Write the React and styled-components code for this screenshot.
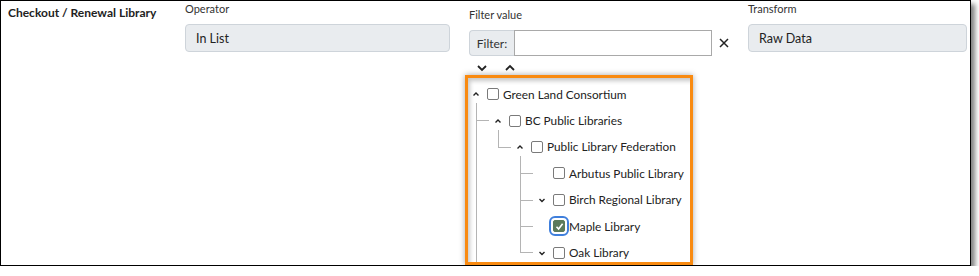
import React from "react";
import styled, { createGlobalStyle } from "styled-components";

const GlobalStyle = createGlobalStyle`
  html, body {
    margin: 0;
    padding: 0;
    background: #fff;
  }
  body {
    font-family: Lato, "Liberation Sans", Arial, sans-serif;
    color: #212529;
  }
`;

const Frame = styled.div`
  width: 971px;
  height: 266px;
  box-sizing: border-box;
  border: 1px solid #000;
  box-shadow: 4px 4px 5px rgba(0, 0, 0, 0.5);
  background: #fff;
  overflow: hidden;
  display: flex;
  align-items: flex-start;
  padding-left: 7px;
`;

const RuleTitle = styled.div`
  width: 177px;
  flex: none;
  padding-top: 4px;
  font-size: 12px;
  font-weight: 700;
  line-height: 16px;
  color: #222;
`;

const Column = styled.div`
  width: ${(p) => p.$width}px;
  margin-right: ${(p) => p.$gap || 0}px;
  padding-top: ${(p) => p.$top || 1}px;
  flex: none;
  display: flex;
  flex-direction: column;
`;

const FieldLabel = styled.div`
  font-size: 11px;
  line-height: 14px;
  color: #333;
  margin-bottom: 8px;
`;

const ReadonlyBox = styled.div`
  height: 28px;
  box-sizing: border-box;
  border: 1px solid #ced4da;
  border-radius: 4px;
  background: #e9ecef;
  padding-left: 10px;
  display: flex;
  align-items: center;
  font-size: 12.5px;
  color: #222;
`;

const FilterRow = styled.div`
  display: flex;
  align-items: center;
  height: 26px;
`;

const Prepend = styled.div`
  width: 45px;
  height: 26px;
  box-sizing: border-box;
  border: 1px solid #ced4da;
  border-right: none;
  border-radius: 4px 0 0 4px;
  background: #e9ecef;
  display: flex;
  align-items: center;
  justify-content: center;
  font-size: 12px;
  color: #333;
`;

const FilterInput = styled.input`
  width: 198px;
  height: 26px;
  box-sizing: border-box;
  border: 1px solid #a9a9a9;
  border-radius: 0;
  margin: 0;
  padding: 0 6px;
  outline: none;
  font-family: inherit;
  font-size: 12px;
`;

const ClearButton = styled.button`
  margin-left: 6px;
  width: 12px;
  height: 12px;
  padding: 0;
  border: none;
  background: none;
  display: flex;
  align-items: center;
  justify-content: center;
`;

const ExpandBar = styled.div`
  display: flex;
  gap: 18px;
  padding-left: 8px;
  margin-top: 6px;
  height: 12px;
  align-items: center;
`;

const IconButton = styled.button`
  padding: 0;
  border: none;
  background: none;
  width: 10px;
  height: 10px;
  display: flex;
`;

const Highlight = styled.div`
  margin-top: 1px;
  margin-left: -4px;
  width: 228px;
  height: 190px;
  box-sizing: border-box;
  border: 3px solid #f98a10;
  box-shadow: 0 0 6px rgba(0, 0, 0, 0.35);
  overflow: hidden;
`;

const TreePanel = styled.div`
  height: 100%;
  box-sizing: border-box;
  padding: 3px 0 0 2px;
  box-shadow: inset 4px 5px 4px -2px rgba(0, 0, 0, 0.22);
  background: #fff;
`;

const Branch = styled.div`
  position: relative;

  ${(p) =>
    p.$depth > 0 &&
    `
    &::before {
      content: "";
      position: absolute;
      left: -16px;
      top: -4px;
      width: 1px;
      height: ${p.$last ? "17px" : "calc(100% + 4px)"};
      background: #b4b4b4;
    }
    &::after {
      content: "";
      position: absolute;
      left: -16px;
      top: 13px;
      width: 13px;
      height: 1px;
      background: #b4b4b4;
    }
  `}
`;

const Children = styled.div`
  padding-left: 22px;
`;

const NodeRow = styled.div`
  height: 26.4px;
  display: flex;
  align-items: center;
`;

const Toggle = styled.span`
  width: 12px;
  height: 8px;
  flex: none;
  display: flex;
  justify-content: center;
`;

const Check = styled.span`
  width: 12px;
  height: 12px;
  box-sizing: border-box;
  flex: none;
  margin-left: 5px;
  border: 1px solid ${(p) => (p.$checked ? "#5b7a5b" : "#7a7a7a")};
  border-radius: 2px;
  background: ${(p) => (p.$checked ? "#5b7a5b" : "#fff")};
  outline: ${(p) => (p.$focused ? "2px solid #3f7fdc" : "none")};
  outline-offset: 2px;
  display: flex;
  align-items: center;
  justify-content: center;
`;

const NodeLabel = styled.span`
  margin-left: 4px;
  font-size: 11.8px;
  color: #222;
  white-space: nowrap;
`;

const Chevron = ({ up }) => (
  <svg width="8" height="8" viewBox="0 0 8 8">
    <polyline
      points={up ? "1.5,5.5 4,3 6.5,5.5" : "1.5,3 4,5.5 6.5,3"}
      fill="none"
      stroke="#222"
      strokeWidth="1.4"
    />
  </svg>
);

const BigChevron = ({ up }) => (
  <svg width="10" height="10" viewBox="0 0 10 10">
    <polyline
      points={up ? "1,7 5,3 9,7" : "1,3 5,7 9,3"}
      fill="none"
      stroke="#222"
      strokeWidth="1.8"
    />
  </svg>
);

const tree = {
  label: "Green Land Consortium",
  open: true,
  more: true,
  children: [
    {
      label: "BC Public Libraries",
      open: true,
      children: [
        {
          label: "Public Library Federation",
          open: true,
          children: [
            { label: "Arbutus Public Library" },
            { label: "Birch Regional Library", children: [] },
            { label: "Maple Library", checked: true, focused: true },
            { label: "Oak Library", children: [] },
          ],
        },
      ],
    },
  ],
};

const TreeNode = ({ item, depth, last }) => (
  <Branch $depth={depth} $last={last}>
    <NodeRow>
      <Toggle>{item.children && <Chevron up={item.open} />}</Toggle>
      <Check $checked={item.checked} $focused={item.focused}>
        {item.checked && (
          <svg width="9" height="9" viewBox="0 0 9 9">
            <polyline
              points="1.5,4.8 3.6,7 7.6,1.8"
              fill="none"
              stroke="#fff"
              strokeWidth="1.6"
            />
          </svg>
        )}
      </Check>
      <NodeLabel>{item.label}</NodeLabel>
    </NodeRow>
    {item.open && item.children && (
      <Children>
        {item.children.map((child, i) => (
          <TreeNode
            key={child.label}
            item={child}
            depth={depth + 1}
            last={i === item.children.length - 1 && !item.more}
          />
        ))}
      </Children>
    )}
  </Branch>
);

export default function App() {
  return (
    <>
      <GlobalStyle />
      <Frame>
        <RuleTitle>Checkout / Renewal Library</RuleTitle>

        <Column $width={265} $gap={19}>
          <FieldLabel>Operator</FieldLabel>
          <ReadonlyBox>In List</ReadonlyBox>
        </Column>

        <Column $width={262} $gap={17} $top={7}>
          <FieldLabel>Filter value</FieldLabel>
          <FilterRow>
            <Prepend>Filter:</Prepend>
            <FilterInput type="text" />
            <ClearButton aria-label="Clear">
              <svg width="10" height="10" viewBox="0 0 10 10">
                <path d="M1 1 L9 9 M9 1 L1 9" stroke="#222" strokeWidth="1.5" />
              </svg>
            </ClearButton>
          </FilterRow>
          <ExpandBar>
            <IconButton aria-label="Expand all">
              <BigChevron />
            </IconButton>
            <IconButton aria-label="Collapse all">
              <BigChevron up />
            </IconButton>
          </ExpandBar>
          <Highlight>
            <TreePanel>
              <TreeNode item={tree} depth={0} last />
            </TreePanel>
          </Highlight>
        </Column>

        <Column $width={219}>
          <FieldLabel>Transform</FieldLabel>
          <ReadonlyBox>Raw Data</ReadonlyBox>
        </Column>
      </Frame>
    </>
  );
}
